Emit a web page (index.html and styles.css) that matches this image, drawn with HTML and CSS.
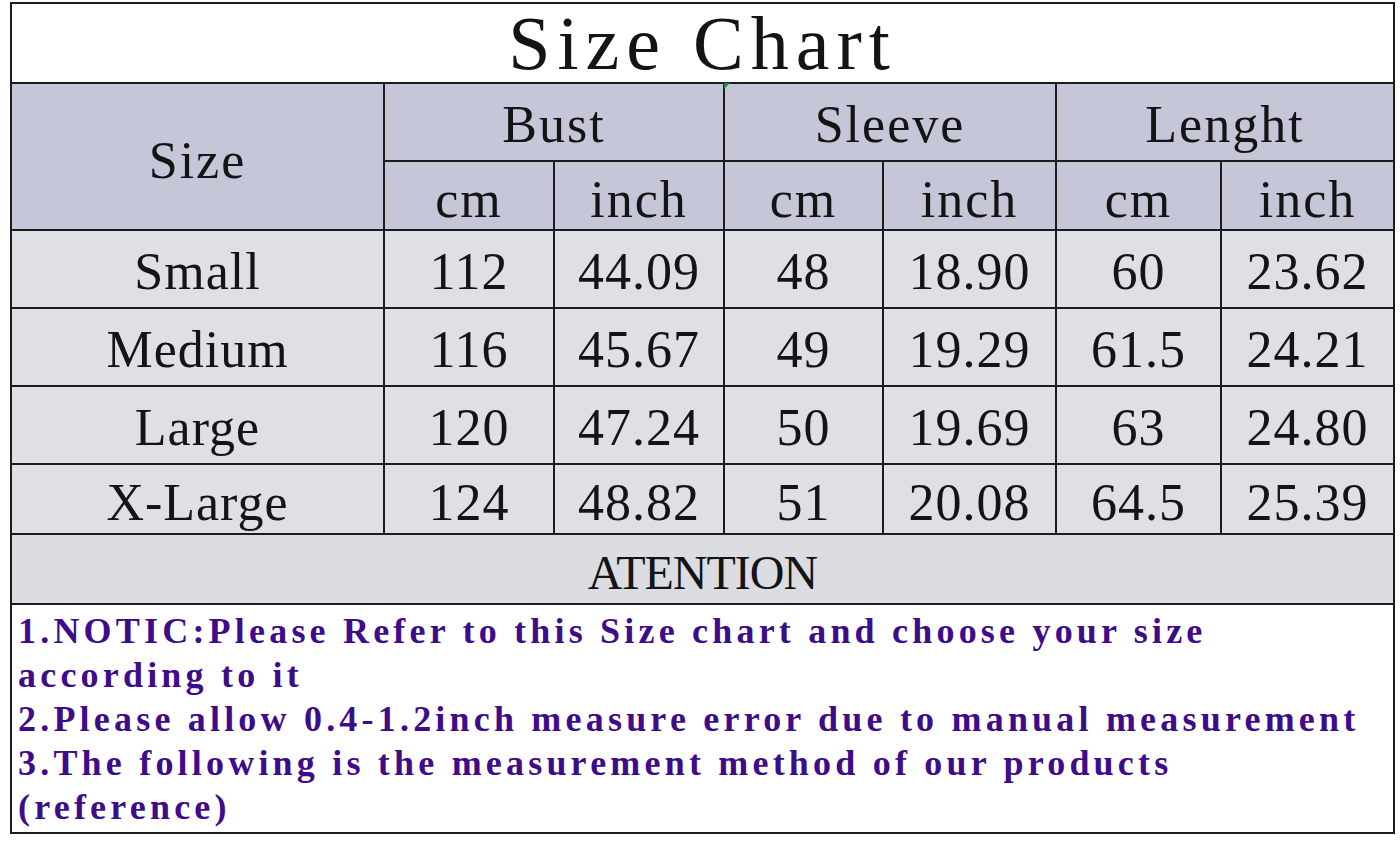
FILE: index.html
```html
<!DOCTYPE html>
<html lang="en">
<head>
<meta charset="utf-8">
<title>Size Chart</title>
<link rel="stylesheet" href="styles.css">
</head>
<body>
<table class="chart">
  <colgroup>
    <col class="col-size">
    <col class="col-a">
    <col class="col-a">
    <col class="col-b">
    <col class="col-c">
    <col class="col-d">
    <col class="col-c">
  </colgroup>
  <tr class="title-row">
    <th colspan="7" class="title">Size Chart</th>
  </tr>
  <tr class="head group">
    <th rowspan="2" class="size-head">Size</th>
    <th colspan="2">Bust</th>
    <th colspan="2" class="sleeve">Sleeve</th>
    <th colspan="2">Lenght</th>
  </tr>
  <tr class="head unit">
    <th>cm</th><th>inch</th>
    <th>cm</th><th>inch</th>
    <th>cm</th><th>inch</th>
  </tr>
  <tr class="data">
    <td>Small</td><td>112</td><td>44.09</td><td>48</td><td>18.90</td><td>60</td><td>23.62</td>
  </tr>
  <tr class="data">
    <td>Medium</td><td>116</td><td>45.67</td><td>49</td><td>19.29</td><td>61.5</td><td>24.21</td>
  </tr>
  <tr class="data">
    <td>Large</td><td>120</td><td>47.24</td><td>50</td><td>19.69</td><td>63</td><td>24.80</td>
  </tr>
  <tr class="data last">
    <td>X-Large</td><td>124</td><td>48.82</td><td>51</td><td>20.08</td><td>64.5</td><td>25.39</td>
  </tr>
  <tr class="attention">
    <td colspan="7">ATENTION</td>
  </tr>
  <tr class="notes">
    <td colspan="7">
      <p>1.NOTIC:Please Refer to this Size chart and choose your size<br>according to it</p>
      <p>2.Please allow 0.4-1.2inch measure error due to manual measurement</p>
      <p>3.The following is the measurement method of our products<br>(reference)</p>
    </td>
  </tr>
</table>
</body>
</html>
```
FILE: styles.css
```css
html, body {
  margin: 0;
  padding: 0;
  background: #ffffff;
}

body {
  padding: 2px 0 0 10px;
  font-family: "Liberation Serif", "Times New Roman", serif;
  color: #141414;
}

.chart {
  border-collapse: collapse;
  table-layout: fixed;
  width: 1385px;
  border: 2px solid #1c1c1c;
}

.col-size { width: 373px; }
.col-a { width: 170px; }
.col-b { width: 159px; }
.col-c { width: 173px; }
.col-d { width: 165px; }

.chart th,
.chart td {
  box-sizing: border-box;
  border: 2px solid #1c1c1c;
  padding: 0;
  text-align: center;
  font-weight: normal;
  vertical-align: middle;
  white-space: nowrap;
  line-height: 1;
}

.title {
  height: 80px;
  background: #ffffff;
  font-size: 76px;
  letter-spacing: 7px;
  padding-top: 9px;
}

.head th {
  background: #c6c6d9;
  font-size: 52px;
  letter-spacing: 2px;
}

.group th { height: 78px; padding-top: 6px; }
.unit th { height: 69px; padding-top: 9px; }
.group th.size-head { height: auto; padding-top: 8px; }

.sleeve { position: relative; }
.sleeve::before {
  content: "";
  position: absolute;
  left: -1px;
  top: -1px;
  border-style: solid;
  border-width: 6px 6px 0 0;
  border-color: #1f8a3a transparent transparent transparent;
}

.data td {
  height: 78px;
  background: #dfe0e5;
  font-size: 52px;
  letter-spacing: 1px;
  padding-top: 5px;
}

.data.last td { height: 70px; padding-top: 7px; }

.attention td {
  height: 70px;
  background: #dcdde3;
  font-size: 48px;
  letter-spacing: -1px;
  padding-top: 7px;
}

.notes td {
  height: 229px;
  text-align: left;
  vertical-align: top;
  background: #ffffff;
  color: #3e0c8a;
  font-size: 36px;
  font-weight: bold;
  letter-spacing: 4.2px;
  line-height: 44px;
  padding: 4px 0 0 6px;
}

.notes p {
  margin: 0;
}
```
